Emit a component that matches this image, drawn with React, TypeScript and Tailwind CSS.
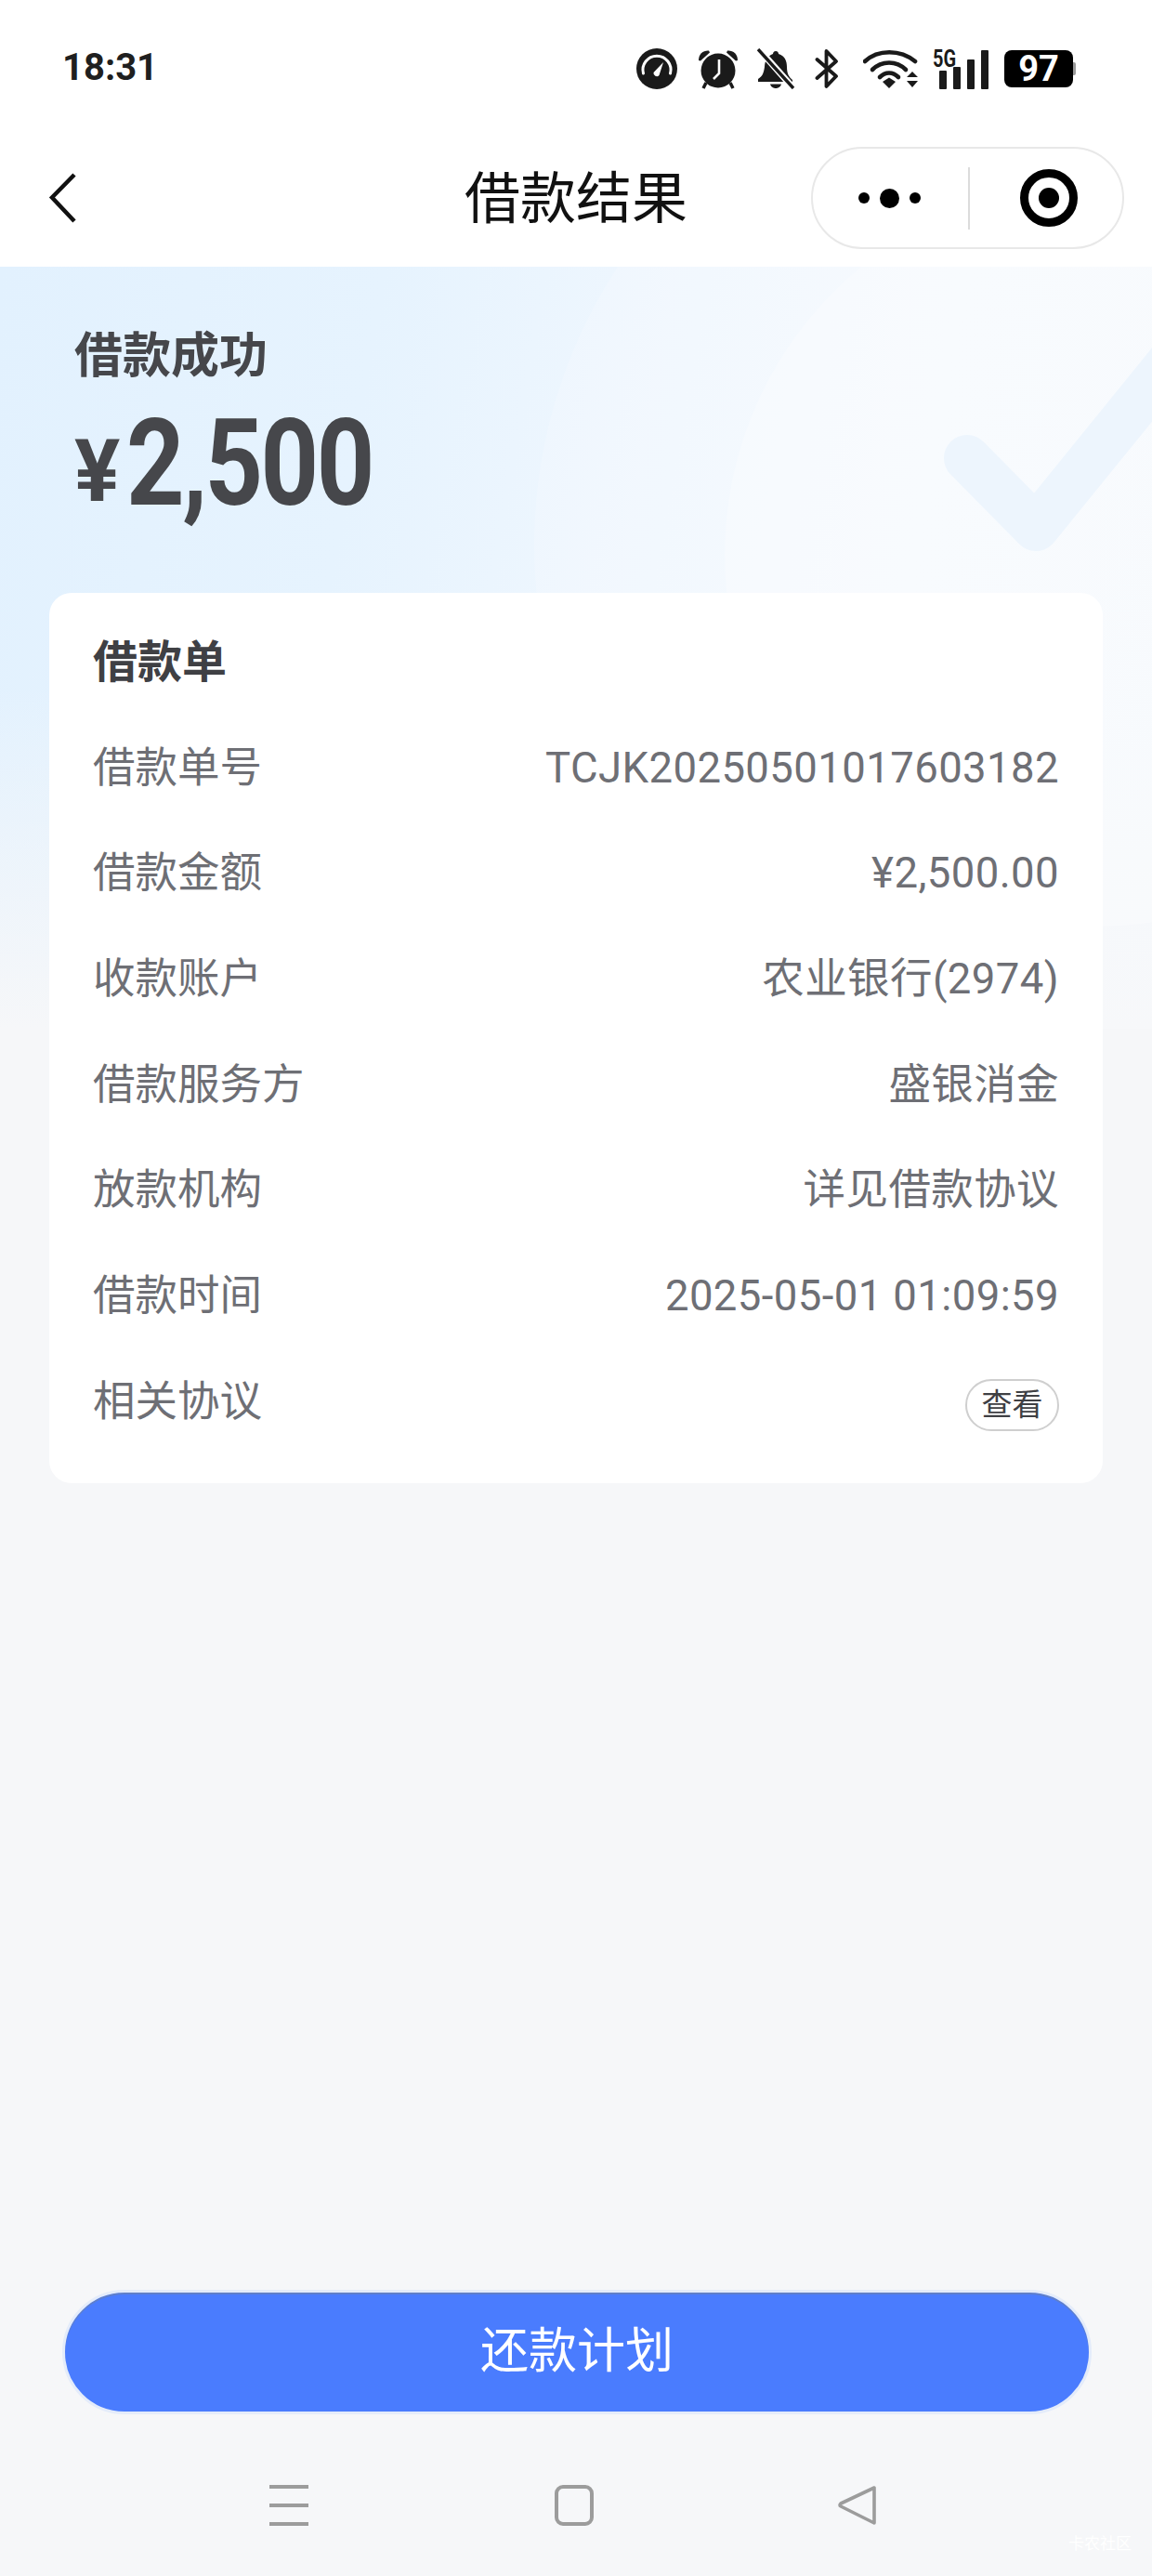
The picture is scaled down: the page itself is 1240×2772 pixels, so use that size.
const fontStack = "font-['Roboto','Noto_Sans_CJK_SC',sans-serif]"

const rows = [
  ['借款单号', 'TCJK20250501017603182'],
  ['借款金额', '¥2,500.00'],
  ['收款账户', '农业银行(2974)'],
  ['借款服务方', '盛银消金'],
  ['放款机构', '详见借款协议'],
  ['借款时间', '2025-05-01 01:09:59'],
]

const StatusIcons = () => {
  return (
    <div className="flex items-center">
      {/* speedometer */}
      <svg width="44" height="44" viewBox="0 0 44 44">
        <circle cx="22" cy="22" r="22" fill="#1a1a1a" />
        <path d="M7.5 27 A15 15 0 1 1 36.5 27" fill="none" stroke="#fff" strokeWidth="3" strokeLinecap="round" />
        <path d="M29 15 L24.5 29 A3.5 3.5 0 0 1 18.5 26 Z" fill="#fff" />
      </svg>
      {/* alarm */}
      <svg width="44" height="44" viewBox="0 0 44 44" className="ml-[22px]">
        <circle cx="22" cy="24" r="18.5" fill="#1a1a1a" />
        <path d="M1 13 C1 6 6 2 12 2.5 L13 4.5 L3 13.5 Z" fill="#1a1a1a" />
        <path d="M43 13 C43 6 38 2 32 2.5 L31 4.5 L41 13.5 Z" fill="#1a1a1a" />
        <path d="M9 37 L6 43 M35 37 L38 43" stroke="#1a1a1a" strokeWidth="3.5" />
        <path d="M23 12 L23 27 L17 33" fill="none" stroke="#fff" strokeWidth="2.6" />
      </svg>
      {/* muted bell */}
      <svg width="42" height="44" viewBox="0 0 42 44" className="ml-[19px]">
        <path d="M21 3 C23 3 24 4.5 24 6 C31 8 33 14 33 20 C33 27 35 31 39 34 L39 36 L2 36 L2 33 C7 30 8 26 9 20 C9 14 12 8 18 6 C18 4.5 19 3 21 3 Z" fill="#1a1a1a" />
        <path d="M15 38.5 L27 38.5 C26 42 23 43 21 43 C19 43 16 42 15 38.5 Z" fill="#1a1a1a" />
        <path d="M2 0 L41 44" stroke="#fff" strokeWidth="7" />
        <path d="M2 1 L40 43" stroke="#1a1a1a" strokeWidth="3.4" />
      </svg>
      {/* bluetooth */}
      <svg width="26" height="44" viewBox="0 0 26 44" className="ml-[21px]">
        <path d="M2.5 12 L23 30 L12.5 41 L12.5 3 L23 14 L2.5 32" fill="none" stroke="#1a1a1a" strokeWidth="3.8" strokeLinejoin="round" strokeLinecap="round" />
      </svg>
      {/* wifi */}
      <svg width="60" height="44" viewBox="0 0 60 44" className="ml-[26px]">
        <path d="M2 14 C16 1 40 1 56 14" fill="none" stroke="#1a1a1a" strokeWidth="4.6" strokeLinecap="round" />
        <path d="M10 23 C20 13 36 13 46 23" fill="none" stroke="#1a1a1a" strokeWidth="4.6" strokeLinecap="round" />
        <path d="M18 31 C24 25 32 25 38 31" fill="none" stroke="#1a1a1a" strokeWidth="4.6" strokeLinecap="round" />
        <path d="M21 36 L28 31.5 L35 36 L28 43 Z" fill="#1a1a1a" />
        <path d="M47 31 L53 25 L59 31 Z M47 35 L59 35 L53 42 Z" fill="#1a1a1a" />
      </svg>
      {/* 5G + signal */}
      <div className="relative ml-[15px] flex h-[44px] w-[60px] items-end gap-[7px] pl-[7px]">
        <span className="absolute top-[-3px] left-0 origin-left scale-x-[0.8] font-['Roboto',sans-serif] text-[25px] leading-[30px] font-bold text-[#1a1a1a]">
          5G
        </span>
        <div className="h-[20px] w-[8px] rounded-[1px] bg-[#1a1a1a]" />
        <div className="h-[24px] w-[8px] rounded-[1px] bg-[#1a1a1a]" />
        <div className="h-[32px] w-[8px] rounded-[1px] bg-[#1a1a1a]" />
        <div className="h-[42px] w-[8px] rounded-[1px] bg-[#1a1a1a]" />
      </div>
      {/* battery */}
      <div className="ml-[17px] flex items-center">
        <div className="flex h-[40px] w-[74px] items-center justify-center rounded-[8px] bg-black font-['Roboto',sans-serif] text-[38px] font-bold text-white">
          97
        </div>
        <div className="h-[14px] w-[3px] rounded-r-[2px] bg-[#9a9a9a]" />
      </div>
    </div>
  )
}

const App = () => {
  return (
    <div className={`flex h-[2772px] w-[1240px] flex-col overflow-hidden bg-[#f6f7f9] ${fontStack}`}>
      <header className="h-[287px] shrink-0 bg-white">
        <div className="flex h-[158px] items-start justify-between pt-[50px] pr-[82px] pl-[67px]">
          <span className="text-[40px] leading-[46px] font-bold text-[#1f1f1f]">18:31</span>
          <div className="pt-[2px]">
            <StatusIcons />
          </div>
        </div>
        <div className="relative flex h-[110px] items-center justify-center">
          <svg width="32" height="54" viewBox="0 0 32 54" className="absolute top-[28px] left-[52px]">
            <path d="M28 2 L4 26.5 L28 52" fill="none" stroke="#111" strokeWidth="4.5" />
          </svg>
          <h1 className="pt-[3px] text-[60px] leading-[70px] font-normal text-[#111]">借款结果</h1>
          <div className="absolute top-0 left-[873px] flex h-[110px] w-[337px] items-center rounded-full border-2 border-[#e8e8e8] bg-white">
            <div className="flex w-[167px] items-center justify-center gap-[11px] pr-[2px]">
              <div className="h-[12px] w-[12px] rounded-full bg-black" />
              <div className="h-[21px] w-[21px] rounded-full bg-black" />
              <div className="h-[12px] w-[12px] rounded-full bg-black" />
            </div>
            <div className="h-[67px] w-[2px] bg-[#dcdcdc]" />
            <div className="ml-[54px] flex h-[62px] w-[62px] items-center justify-center rounded-full border-[9px] border-black">
              <div className="h-[22px] w-[22px] rounded-full bg-black" />
            </div>
          </div>
        </div>
      </header>

      <main className="relative flex-1">
        <div className="absolute inset-x-0 top-0 h-[820px] overflow-hidden bg-[linear-gradient(180deg,rgba(246,247,249,0)_55%,#f6f7f9_100%),linear-gradient(100deg,#e2f1fe_0%,#e6f3fe_30%,#f0f7fe_55%,#f5f9fe_75%,#f3f8fd_100%)]">
          <svg width="1240" height="820" viewBox="0 0 1240 820" className="absolute inset-0">
            <circle cx="1120" cy="300" r="545" fill="#fff" fillOpacity="0.18" />
            <circle cx="1180" cy="310" r="400" fill="#fff" fillOpacity="0.25" />
            <path d="M1041 206 L1115 281 L1270 90" fill="none" stroke="#edf5fd" strokeWidth="50" strokeLinecap="round" strokeLinejoin="round" />
          </svg>
        </div>

        <div className="relative flex flex-col">
          <section className="h-[351px] pt-[61px] pl-[80px] text-[#46474b]">
            <p className="text-[52px] leading-[72px] font-bold">借款成功</p>
            <div className="mt-[19px] flex h-[120px] items-end font-['Roboto',sans-serif] font-bold">
              <span className="w-[56px] text-[92px] leading-[102px] font-bold">¥</span>
              <span className="origin-left scale-x-[0.84] text-[130px] leading-[120px] font-bold tracking-[-3px]">2,500</span>
            </div>
          </section>

          <section className="mx-[53px] rounded-[24px] bg-white px-[47px] pb-[30px]">
            <h2 className="flex h-[132px] items-center pt-[18px] text-[48px] leading-none font-bold text-[#3f4044]">
              借款单
            </h2>
            {rows.map(([label, value]) => (
              <div key={label} className="flex h-[113.7px] items-center justify-between text-[45.5px] text-[#6e6f75]">
                <span>{label}</span>
                <span className="tracking-[0.4px]">{value}</span>
              </div>
            ))}
            <div className="flex h-[113.7px] items-center justify-between text-[45.5px] text-[#6e6f75]">
              <span>相关协议</span>
              <button className="mt-[6px] flex h-[56px] w-[101px] items-center justify-center rounded-full border-2 border-[#cfcfcf] text-[33px] text-[#3f4044]">
                查看
              </button>
            </div>
          </section>
        </div>
      </main>

      <div className="flex shrink-0 flex-col items-center bg-[#f6f7f9]">
        <button className="ml-[2px] h-[134px] w-[1108px] rounded-full border-[3px] border-[#e4ecfa] bg-[#4a7cfe] text-[52px] text-white shadow-[inset_0_2px_0_#5f7fc9]">
          还款计划
        </button>
        <nav className="relative h-[174px] w-full">
          <div className="absolute top-[76px] left-[290px] flex h-[44px] w-[42px] flex-col justify-between">
            <div className="h-[4px] bg-[#9c9c9c]" />
            <div className="h-[4px] bg-[#9c9c9c]" />
            <div className="h-[4px] bg-[#9c9c9c]" />
          </div>
          <div className="absolute top-[76px] left-[597px] h-[44px] w-[42px] rounded-[9px] border-[4px] border-[#9c9c9c]" />
          <svg width="42" height="44" viewBox="0 0 42 44" className="absolute top-[76px] left-[902px]">
            <path d="M39 3 L39 41 L3 23 Q1 22 3 20 Z" fill="none" stroke="#9c9c9c" strokeWidth="3.6" strokeLinejoin="round" />
          </svg>
          <span className="absolute top-[131px] left-[1150px] text-[17px] leading-none whitespace-nowrap text-white">卡农社区</span>
        </nav>
      </div>
    </div>
  )
}

export default App
